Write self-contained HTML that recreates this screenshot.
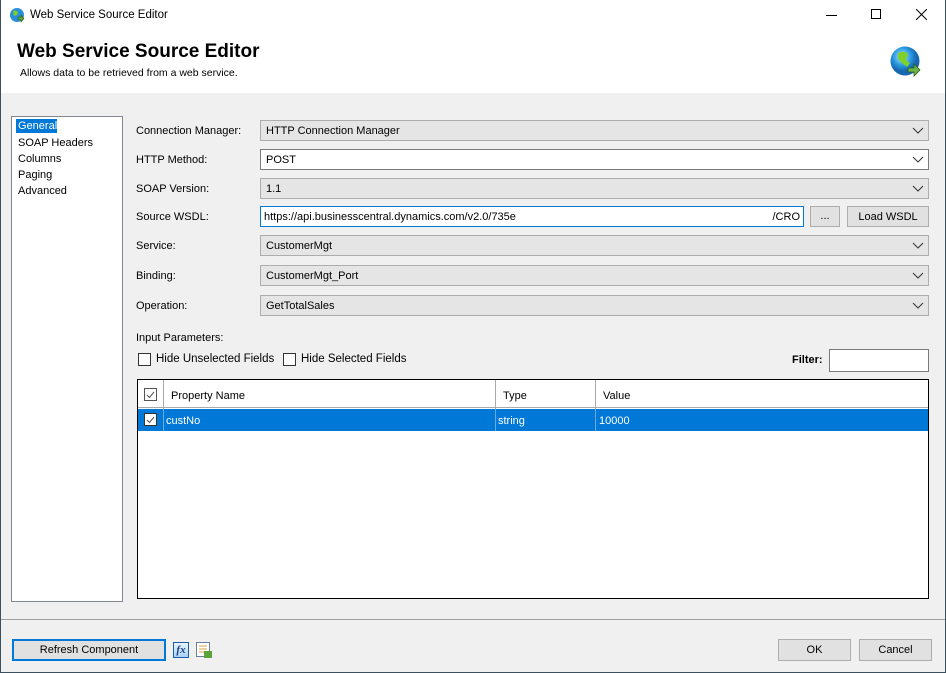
<!DOCTYPE html>
<html><head><meta charset="utf-8"><style>
*{box-sizing:border-box;margin:0;padding:0}
body{width:946px;height:673px;overflow:hidden;background:#f0f0f0;font-family:"Liberation Sans",sans-serif;font-size:11px;color:#000;position:relative}
.a{position:absolute}
.win{left:0;top:0;width:946px;height:673px;border:1px solid #3c4f5f;border-top:none}
.hdr{left:1px;top:0;width:944px;height:93px;background:#fff}
.lbl{position:absolute;left:136px;font-size:11px;margin-top:1px}
.cb{position:absolute;left:260px;width:669px;height:21px;background:#e5e5e5;border:1px solid #adadad;padding:4px 5px 0;font-size:11px}
.cb.w{background:#fff;border-color:#7a7a7a}
.chev{position:absolute;right:4px;top:4px;width:12px;height:10px}
.btn{position:absolute;background:#e1e1e1;border:1px solid #adadad;text-align:center;font-size:11px}
.chk{position:absolute;width:13px;height:13px;border:1px solid #333;background:#fff}
</style></head><body>
<div class="a win"></div>
<div class="a hdr"></div>
<svg class="a" style="left:9px;top:7px" width="16" height="16" viewBox="0 0 16 16"><circle cx="8" cy="8" r="7" fill="#2a8fd8"/><path d="M4 4 Q7 3 9 5 L8 8 L5 9 Z" fill="#7fd02a"/><path d="M9 10 h3 v-2 l3 3.5 l-3 3.5 v-2 h-3z" fill="#5aa33a" stroke="#2d5a1c" stroke-width=".6"/></svg>
<div class="a" style="left:30px;top:9px;font-size:11.5px">Web Service Source Editor</div>
<div class="a" style="left:826px;top:15px;width:11px;height:1px;background:#000"></div>
<div class="a" style="left:871px;top:9px;width:10px;height:10px;border:1px solid #000"></div>
<svg class="a" style="left:916px;top:9px" width="11" height="11"><path d="M0 0L11 11M11 0L0 11" stroke="#000" stroke-width="1"/></svg>
<div class="a" style="left:17px;top:41px;font-size:19px;font-weight:bold">Web Service Source Editor</div>
<div class="a" style="left:20px;top:67px;font-size:10.5px">Allows data to be retrieved from a web service.</div>
<svg class="a" style="left:890px;top:46px" width="34" height="34" viewBox="0 0 34 34"><defs><radialGradient id="g" cx=".4" cy=".35"><stop offset="0" stop-color="#bfe6ff"/><stop offset=".6" stop-color="#2a9ae0"/><stop offset="1" stop-color="#1666b0"/></radialGradient></defs><circle cx="15" cy="15" r="14.5" fill="url(#g)"/><path d="M8 7 Q14 4 18 8 L16 14 L20 17 L17 21 L12 17 L8 13Z" fill="#7fd02a"/><path d="M18 22 h6 v-4 l6 6 l-6 6 v-4 h-6z" fill="#6cb548" stroke="#2d5a1c" stroke-width=".8"/></svg>
<div class="a" style="left:11px;top:116px;width:112px;height:486px;background:#fff;border:1px solid #828790"></div>
<div class="a" style="left:16px;top:119px;width:41px;height:14px;background:#0078d7;color:#fff;padding-left:2px;line-height:14px">General</div>
<div class="a" style="left:18px;top:135px;line-height:16px">SOAP Headers<br>Columns<br>Paging<br>Advanced</div>
<div class="lbl" style="top:124px">Connection Manager:</div>
<div class="cb" style="top:120px">HTTP Connection Manager<svg class="chev"><path d="M1 3l5 5 5-5" fill="none" stroke="#333"/></svg></div>
<div class="lbl" style="top:153px">HTTP Method:</div>
<div class="cb w" style="top:149px">POST<svg class="chev"><path d="M1 3l5 5 5-5" fill="none" stroke="#333"/></svg></div>
<div class="lbl" style="top:182px">SOAP Version:</div>
<div class="cb" style="top:178px">1.1<svg class="chev"><path d="M1 3l5 5 5-5" fill="none" stroke="#333"/></svg></div>
<div class="lbl" style="top:210px">Source WSDL:</div>
<div class="cb w" style="top:206px;width:544px;border-color:#0078d7;padding-left:3px">https://api.businesscentral.dynamics.com/v2.0/735e<span style="position:absolute;right:3px">/CRO</span></div>
<div class="btn" style="left:810px;top:206px;width:30px;height:21px;line-height:19px">...</div>
<div class="btn" style="left:847px;top:206px;width:82px;height:21px;line-height:20px">Load WSDL</div>
<div class="lbl" style="top:239px">Service:</div>
<div class="cb" style="top:235px">CustomerMgt<svg class="chev"><path d="M1 3l5 5 5-5" fill="none" stroke="#333"/></svg></div>
<div class="lbl" style="top:269px">Binding:</div>
<div class="cb" style="top:265px">CustomerMgt_Port<svg class="chev"><path d="M1 3l5 5 5-5" fill="none" stroke="#333"/></svg></div>
<div class="lbl" style="top:299px">Operation:</div>
<div class="cb" style="top:295px">GetTotalSales<svg class="chev"><path d="M1 3l5 5 5-5" fill="none" stroke="#333"/></svg></div>
<div class="lbl" style="top:331px">Input Parameters:</div>
<div class="chk" style="left:138px;top:353px"></div>
<div class="a" style="left:156px;top:353px;font-size:11.5px">Hide Unselected Fields</div>
<div class="chk" style="left:283px;top:353px"></div>
<div class="a" style="left:301px;top:353px;font-size:11.5px">Hide Selected Fields</div>
<div class="a" style="left:792px;top:354px;font-weight:bold">Filter:</div>
<div class="a" style="left:829px;top:349px;width:100px;height:23px;background:#fff;border:1px solid #7a7a7a"></div>
<div class="a" style="left:137px;top:379px;width:792px;height:220px;background:#fff;border:1px solid #000"></div>
<div class="a" style="left:138px;top:380px;width:790px;height:28px;background:#fff;border-bottom:1px solid #aaa"></div>
<div class="a" style="left:163px;top:380px;width:1px;height:51px;background:#aaa"></div>
<div class="a" style="left:495px;top:380px;width:1px;height:51px;background:#aaa"></div>
<div class="a" style="left:595px;top:380px;width:1px;height:51px;background:#aaa"></div>
<div class="chk" style="left:144px;top:388px;border-color:#555"><svg width="11" height="11" style="position:absolute;left:0;top:0"><path d="M2 6l2.5 2.5L9 3" fill="none" stroke="#555"/></svg></div>
<div class="a" style="left:171px;top:390px">Property Name</div>
<div class="a" style="left:503px;top:390px">Type</div>
<div class="a" style="left:603px;top:390px">Value</div>
<div class="a" style="left:138px;top:409px;width:790px;height:22px;background:#0078d7"></div>
<div class="chk" style="left:144px;top:413px;border-color:#333"><svg width="11" height="11" style="position:absolute;left:0;top:0"><path d="M2 6l2.5 2.5L9 3" fill="none" stroke="#555"/></svg></div>
<div class="a" style="left:166px;top:415px;color:#fff">custNo</div>
<div class="a" style="left:498px;top:415px;color:#fff">string</div>
<div class="a" style="left:599px;top:415px;color:#fff">10000</div>
<div class="a" style="left:163px;top:409px;width:1px;height:22px;background:#6aa8e0"></div>
<div class="a" style="left:495px;top:409px;width:1px;height:22px;background:#6aa8e0"></div>
<div class="a" style="left:595px;top:409px;width:1px;height:22px;background:#6aa8e0"></div>
<div class="a" style="left:1px;top:619px;width:944px;height:1px;background:#a0a0a0"></div>
<div class="btn" style="left:12px;top:639px;width:154px;height:22px;border:2px solid #0078d7;line-height:19px">Refresh Component</div>
<div class="a" style="left:173px;top:642px;width:16px;height:16px;background:linear-gradient(#e8f4ff,#a9d2f5);border:1px solid #1d5ba8;font:italic bold 11px 'Liberation Serif',serif;color:#1d3f88;text-align:center;line-height:14px">fx</div>
<svg class="a" style="left:196px;top:642px" width="17" height="17"><rect x="0.5" y="0.5" width="13" height="14" fill="#fff" stroke="#6a7f99"/><path d="M3 4h8M3 7h8M3 10h5" stroke="#e0a040"/><rect x="8" y="9" width="8" height="7" fill="#5aa33a"/></svg>
<div class="btn" style="left:778px;top:639px;width:73px;height:22px;line-height:21px">OK</div>
<div class="btn" style="left:859px;top:639px;width:73px;height:22px;line-height:21px">Cancel</div>
</body></html>
